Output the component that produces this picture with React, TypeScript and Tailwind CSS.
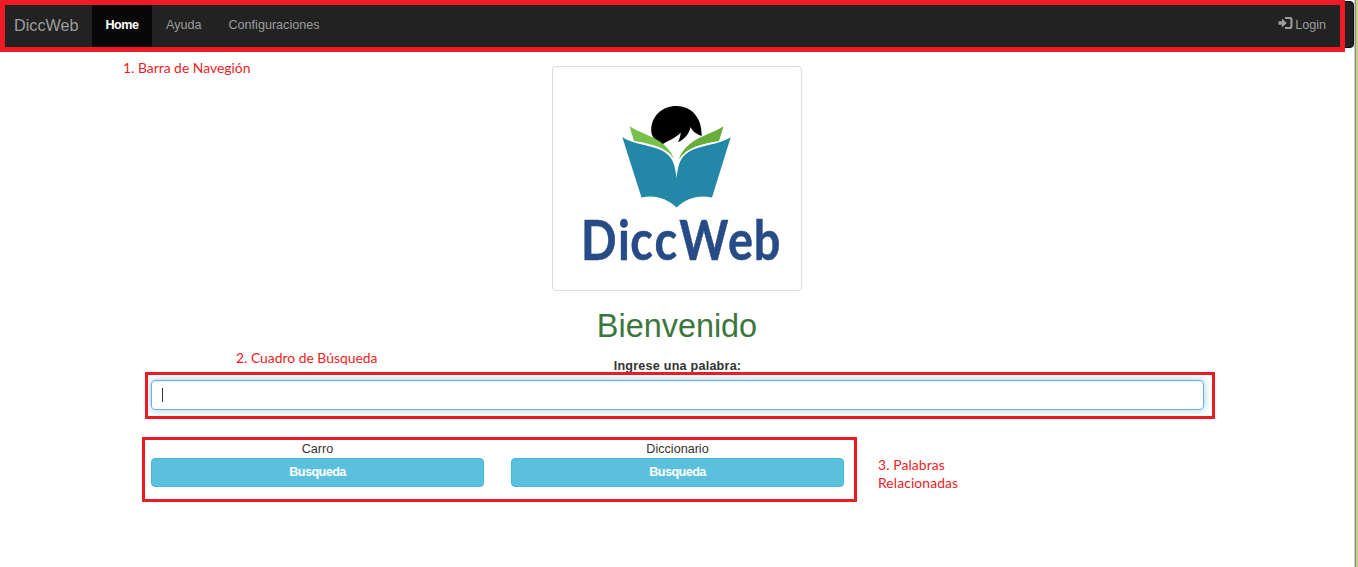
import React from "react";

function LoginIcon() {
  return (
    <svg width="15" height="13" viewBox="0 0 15 13" fill="#9d9d9d" aria-hidden="true">
      <path d="M0.5 4.3h3.4V1.6L8.8 6 3.9 10.4V7.7H0.5z" />
      <path d="M7 0h5.2Q14.5 0 14.5 2.3v7.4q0 2.3-2.3 2.3H7v-2h4.6q0.8 0 0.8-0.8V2.8q0-0.8-0.8-0.8H7z" />
    </svg>
  );
}

function Logo() {
  return (
    <svg width="248" height="223" viewBox="553 67 248 223" role="img" aria-label="DiccWeb">
      <path
        fill="#000"
        d="M662 144.500C655 141 651 136 651.200 130C651.500 116 662 106 676.500 106C691 106 702 117 701.700 136C696 134 692 131 690.600 127C689 134 685 139 678 142.300C679.500 139 680.500 136 680.700 132.500C676 138 669 140 662 144.500Z"
      />
      <path fill="#77c14b" d="M629.500 126.300C642 135 667 138 674.300 159.500C667 147 650 143.500 634 141Z" />
      <path fill="#67ad3a" d="M723.600 126.300C711 135 686 138 678.700 159.500C687 147 703 143.500 719 141Z" />
      <path
        fill="#2387a8"
        d="M622.300 137.200C634 145 653 144.500 664.500 152C674 158 675 167 676.600 178C678 167 679 158 688.500 152C700 144.500 719 145 730.700 137.200L712 197.500C698 194.500 686 198.500 676.600 207.500C667 198.500 655 194.500 641.500 197.500Z"
      />
      <g
        transform="scale(0.86 1)"
        fill="#274b87"
        stroke="#274b87"
        strokeWidth="0.5"
        fontFamily="Lato, sans-serif"
        fontWeight="700"
        fontSize="54.500"
      >
        <text y="260.200" x="675.500 718.500 732.800 761 789.800 846.500 876.500">DiccWeb</text>
      </g>
    </svg>
  );
}

function Related({ word }: { word: string }) {
  return (
    <div className="flex w-[333px] flex-col text-center">
      <span className="h-[18px] leading-[18px]">{word}</span>
      <button className="h-[29px] rounded-[4px] border border-[#46b8da] bg-[#5bc0de] pb-px font-bold tracking-[-0.55px] text-white">
        Busqueda
      </button>
    </div>
  );
}

export default function App() {
  return (
    <div className="relative flex h-[567px] w-[1358px] overflow-hidden bg-white font-['Liberation_Sans',Arial,sans-serif] text-[12.6px] text-[#333]">
      <div className="flex w-[1354px] flex-col">
        <nav className="mt-px flex h-[47px] items-stretch rounded-[4px] border border-[#080808] bg-[#222] text-[#9d9d9d]">
          <a className="w-[91px] pl-[13px] text-[16.2px] leading-[47px]">DiccWeb</a>
          <a className="w-[60px] bg-[#080808] text-center font-bold leading-[46px] tracking-[-0.5px] text-white">Home</a>
          <a className="pl-[14px] leading-[46px]">Ayuda</a>
          <a className="pl-[27px] leading-[46px]">Configuraciones</a>
          <a className="ml-auto flex pr-[27px] leading-[46px]">
            <span className="mr-[2px] pt-[15px]"><LoginIcon /></span>
            Login
          </a>
        </nav>
        <main className="ml-[151px] flex w-[1053px] flex-col items-center">
          <div className="mr-[2px] mt-[18px] h-[225px] w-[250px] rounded-[4px] border border-[#ddd]">
            <Logo />
          </div>
          <h1 className="mt-[17px] h-[36px] pr-px text-[32.4px] leading-[36px] text-[#3c763d]">Bienvenido</h1>
          <label className="mt-[12px] h-[18px] font-bold leading-[20px] tracking-[0.22px]">Ingrese una palabra:</label>
          <div className="mt-[6px] flex h-[30px] w-full items-center rounded-[4px] border border-[#66afe9] pl-[10px] shadow-[inset_0_1px_1px_rgba(0,0,0,0.075),0_0_8px_rgba(102,175,233,0.6)]">
            <span className="h-[14px] w-px bg-[#333]" />
          </div>
          <div className="mt-[30px] flex w-full gap-[27px]">
            <Related word="Carro" />
            <Related word="Diccionario" />
          </div>
        </main>
      </div>
      <div className="w-px bg-[#c9c9d3]" />
      <div className="w-px bg-[#8d9471]" />
      <div className="w-[2px] bg-[#c5cf8e]" />

      <div className="absolute left-0 top-0 h-[52px] w-[1345px] border-[5px] border-[#ed1c24]" />
      <div className="absolute left-[145px] top-[372px] h-[47px] w-[1070px] border-[3px] border-[#ed1c24]" />
      <div className="absolute left-[142px] top-[437px] h-[65px] w-[715px] border-[3px] border-[#ed1c24]" />
      <div className="font-[Lato,sans-serif] text-[13.9px] leading-[18px] text-[#ed1c24]">
        <p className="absolute left-[123px] top-[59px] whitespace-nowrap">1. Barra de Navegión</p>
        <p className="absolute left-[236px] top-[349px] whitespace-nowrap">2. Cuadro de Búsqueda</p>
        <p className="absolute left-[878px] top-[456px] whitespace-nowrap tracking-[0.1px]">
          3. Palabras
          <br />
          Relacionadas
        </p>
      </div>
    </div>
  );
}
